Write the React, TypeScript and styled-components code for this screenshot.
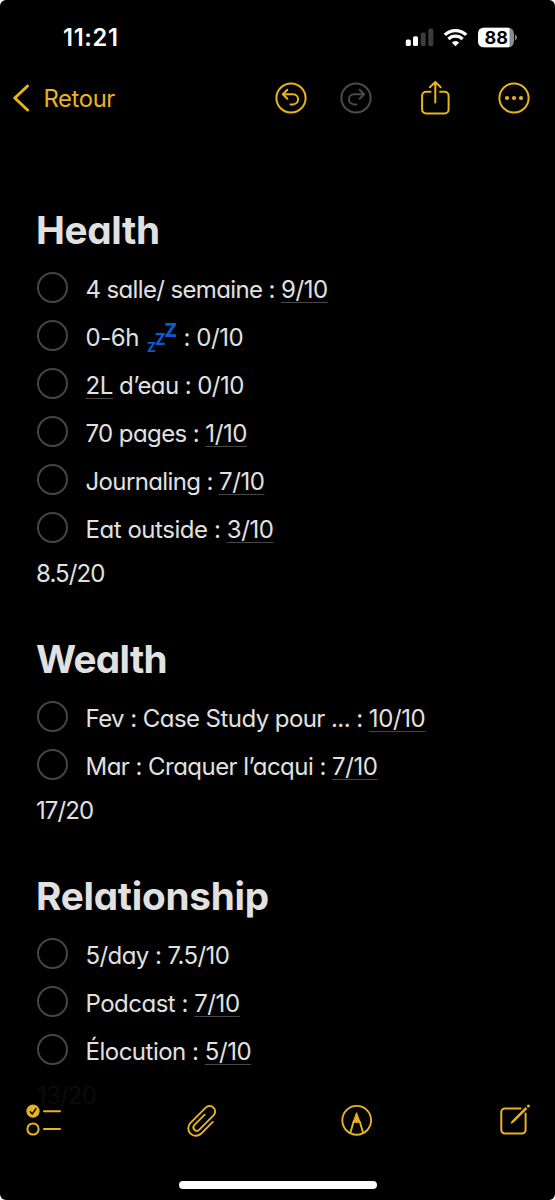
import React from 'react';
import styled, { createGlobalStyle } from 'styled-components';

const GOLD = '#e8b41c';

const Global = createGlobalStyle`
  body { margin: 0; background: #fff; }
  * { box-sizing: border-box; }
`;

const Screen = styled.main`
  width: 555px;
  height: 1200px;
  display: flex;
  flex-direction: column;
  overflow: hidden;
  background: #000;
  border-radius: 6px;
  color: #e1e1e1;
  font-family: Inter, 'Liberation Sans', sans-serif;
`;

const StatusBar = styled.header`
  height: 70px;
  flex: none;
  display: flex;
  justify-content: space-between;
  align-items: center;
  padding: 5px 38px 0 63px;
  color: #fff;
`;

const Clock = styled.time`
  font-size: 23.6px;
  font-weight: 600;
  letter-spacing: 0.7px;
`;

const StatusIcons = styled.div`
  display: flex;
  align-items: center;
`;

const NavBar = styled.nav`
  height: 56px;
  flex: none;
  display: flex;
  align-items: center;
  padding: 0 24px 0 12px;
  color: ${GOLD};
`;

const BackButton = styled.button`
  display: flex;
  align-items: center;
  gap: 13.4px;
  padding: 0;
  border: 0;
  background: none;
  color: inherit;
  font: 400 23.8px/30px Inter, sans-serif;
  letter-spacing: -0.35px;
`;

const BackLabel = styled.span`
  padding-top: 2px;
`;

const NavActions = styled.div`
  display: flex;
  align-items: center;
  margin-left: auto;
`;

const IconButton = styled.button<{ $dim?: boolean; $gap?: number }>`
  display: flex;
  padding: 0;
  border: 0;
  margin-left: ${(p) => p.$gap ?? 0}px;
  background: none;
  color: ${(p) => (p.$dim ? '#4b4b4d' : GOLD)};
`;

const Note = styled.article`
  flex: 1;
  min-height: 0;
  overflow: hidden;
  padding: 77px 36px 0;
  font-size: 24px;
  font-feature-settings: 'cv11';
`;

const Section = styled.section`
  margin-bottom: 34px;
`;

const Heading = styled.h1<{ $spacing: number }>`
  margin: 0 0 7px;
  height: 53px;
  line-height: 54px;
  font-size: 38.7px;
  font-weight: 700;
  letter-spacing: ${(p) => p.$spacing}px;
`;

const List = styled.ul`
  margin: 0;
  padding: 0;
  list-style: none;
`;

const Item = styled.li`
  display: flex;
  align-items: center;
  height: 48px;
  padding-left: 1px;
`;

const Circle = styled.span`
  flex: none;
  width: 31px;
  height: 31px;
  border: 2px solid #454548;
  border-radius: 50%;
`;

const Label = styled.span<{ $spacing: number }>`
  margin-left: 17.5px;
  padding-top: 5px;
  line-height: 30px;
  white-space: pre;
  letter-spacing: ${(p) => p.$spacing}px;
`;

const Detected = styled.span`
  letter-spacing: -0.4px;
  text-decoration: underline;
  text-decoration-color: #464648;
  text-decoration-thickness: 1px;
  text-underline-offset: 4px;
`;

const Total = styled.p`
  margin: 0;
  height: 47px;
  line-height: 45px;
  letter-spacing: -0.9px;
`;

const FadedTotal = styled.p`
  margin: -26px 0 0;
  padding-left: 1px;
  line-height: 30px;
  letter-spacing: -0.8px;
  color: #0b0b0b;
`;

const Sleep = styled.svg`
  vertical-align: -7px;
  margin: -6px 0 0 2px;
  overflow: visible;
`;

const Toolbar = styled.footer`
  position: relative;
  height: 72px;
  flex: none;
  display: flex;
  justify-content: space-between;
  align-items: flex-start;
  margin-top: -14px;
  padding: 0 23px 0 26px;
`;

const HomeArea = styled.div`
  height: 30px;
  flex: none;
  display: flex;
  justify-content: center;
  padding-top: 11px;
`;

const HomeBar = styled.div`
  width: 198px;
  height: 8px;
  border-radius: 4px;
  background: #fff;
`;

const Zzz = () => (
  <Sleep width="30" height="30" viewBox="0 0 30 30" fill="#0b5bd3" fontFamily="Inter, sans-serif" fontWeight="800" letterSpacing="0">
    <text x="0" y="29" fontSize="13" textLength="8.8" lengthAdjust="spacingAndGlyphs">Z</text>
    <text x="8" y="21.5" fontSize="15.5" textLength="10.6" lengthAdjust="spacingAndGlyphs">Z</text>
    <text x="17.5" y="13.5" fontSize="18.8" textLength="12.6" lengthAdjust="spacingAndGlyphs">Z</text>
  </Sleep>
);

type Row = { text: React.ReactNode; spacing: number };
type Group = { title: string; spacing: number; rows: Row[]; total?: string };

const groups: Group[] = [
  {
    title: 'Health',
    spacing: -0.35,
    total: '8.5/20',
    rows: [
      { spacing: -0.63, text: <>4 salle/ semaine : <Detected>9/10</Detected></> },
      { spacing: -0.45, text: <>0-6h <Zzz /> : 0/10</> },
      { spacing: -0.57, text: <><Detected>2L</Detected> d’eau : 0/10</> },
      { spacing: -0.59, text: <>70 pages : <Detected>1/10</Detected></> },
      { spacing: -0.62, text: <>Journaling : <Detected>7/10</Detected></> },
      { spacing: -0.45, text: <>Eat outside : <Detected>3/10</Detected></> },
    ],
  },
  {
    title: 'Wealth',
    spacing: -0.7,
    total: '17/20',
    rows: [
      { spacing: -0.56, text: <>Fev : Case Study pour ... : <Detected>10/10</Detected></> },
      { spacing: -0.54, text: <>Mar : Craquer l’acqui : <Detected>7/10</Detected></> },
    ],
  },
  {
    title: 'Relationship',
    spacing: -0.25,
    rows: [
      { spacing: -0.57, text: <>5/day : 7.5/10</> },
      { spacing: -0.5, text: <>Podcast : <Detected>7/10</Detected></> },
      { spacing: -0.5, text: <>Élocution : <Detected>5/10</Detected></> },
    ],
  },
];

const line = { fill: 'none', stroke: 'currentColor', strokeLinecap: 'round', strokeLinejoin: 'round' } as const;

export default function App() {
  return (
    <>
      <Global />
      <Screen>
        <StatusBar>
          <Clock>11:21</Clock>
          <StatusIcons>
            <svg width="112" height="24" viewBox="0 0 112 24">
              <g fill="#fff">
                <rect x="0.8" y="13.5" width="5" height="6.5" rx="1.5" />
                <rect x="8" y="10.3" width="5" height="9.7" rx="1.5" />
                <g fill="#3c3c3c">
                  <rect x="15.7" y="6.5" width="5" height="13.5" rx="1.5" />
                  <rect x="23.3" y="2.5" width="5" height="17.5" rx="1.5" />
                </g>
                <path d="M50.5 20.2l-3.7-3.7a5.3 5.3 0 0 1 7.4 0z" />
              </g>
              <path d="M39.8 8.9a15.3 15.3 0 0 1 21.4 0M43.4 13a10.2 10.2 0 0 1 14.2 0" fill="none" stroke="#fff" strokeWidth="3.3" />
              <clipPath id="battery"><rect x="73" y="1.5" width="36" height="20" rx="6.2" /></clipPath>
              <g clipPath="url(#battery)">
                <rect x="73" y="1.5" width="36" height="20" fill="#8b8b8b" />
                <rect x="73" y="1.5" width="31.5" height="20" fill="#fff" />
              </g>
              <path d="M110 8.5q2 .8 2 3t-2 3z" fill="#8b8b8b" />
              <text x="91.2" y="18" textAnchor="middle" fontSize="18" fontWeight="700" fontFamily="Inter, sans-serif" fill="#000">88</text>
            </svg>
          </StatusIcons>
        </StatusBar>
        <NavBar>
          <BackButton>
            <svg width="18" height="28" viewBox="0 0 18 28" {...line} strokeWidth="3"><path d="M15.5 2L2.8 14l12.7 12" /></svg>
            <BackLabel>Retour</BackLabel>
          </BackButton>
          <NavActions>
            <IconButton aria-label="Undo">
              <svg width="34" height="34" viewBox="0 0 34 34" {...line} strokeWidth="2">
                <circle cx="17" cy="17" r="14.6" />
                <path d="M13.3 8.7L8.8 13.2l4.5 4.5M9.3 13.2h9.7a5.1 5.1 0 0 1 0 10.2h-2.5" />
              </svg>
            </IconButton>
            <IconButton $dim $gap={31} aria-label="Redo">
              <svg width="34" height="34" viewBox="0 0 34 34" {...line} strokeWidth="2">
                <circle cx="17" cy="17" r="14.6" />
                <path d="M20.7 8.7l4.5 4.5-4.5 4.5M24.7 13.2H15a5.1 5.1 0 0 0 0 10.2h2.5" />
              </svg>
            </IconButton>
            <IconButton $gap={46} aria-label="Share">
              <svg width="34" height="38" viewBox="0.9 0.4 34 38" {...line} strokeWidth="2">
                <path d="M12.5 13.2H8a4 4 0 0 0-4 4v13.6a4 4 0 0 0 4 4h18.5a4 4 0 0 0 4-4V17.2a4 4 0 0 0-4-4H22M17.2 24V3.5M11.8 8.7l5.4-5.4 5.4 5.4" />
              </svg>
            </IconButton>
            <IconButton $gap={44} aria-label="More">
              <svg width="34" height="34" viewBox="0 0 34 34" {...line} strokeWidth="2">
                <circle cx="17" cy="17" r="14.6" />
                <g fill="currentColor" stroke="none"><circle cx="10" cy="17" r="2.1" /><circle cx="17" cy="17" r="2.1" /><circle cx="24" cy="17" r="2.1" /></g>
              </svg>
            </IconButton>
          </NavActions>
        </NavBar>
        <Note>
          {groups.map((g) => (
            <Section key={g.title}>
              <Heading $spacing={g.spacing}>{g.title}</Heading>
              <List>
                {g.rows.map((r, i) => (
                  <Item key={i}><Circle /><Label $spacing={r.spacing}>{r.text}</Label></Item>
                ))}
              </List>
              {g.total && <Total>{g.total}</Total>}
            </Section>
          ))}
          <FadedTotal>13/20</FadedTotal>
        </Note>
        <Toolbar>
          <IconButton aria-label="Checklist">
            <svg width="36" height="44" viewBox="0 0 36 44" {...line} strokeWidth="2">
              <circle cx="7" cy="13.2" r="6.6" fill="currentColor" stroke="none" />
              <path d="M4.3 13.7l2 2.2 3.7-5.3" stroke="#000" strokeWidth="1.5" />
              <circle cx="7" cy="31" r="5.6" /><path d="M18 13.2h16M18 31h16" />
            </svg>
          </IconButton>
          <IconButton aria-label="Attach">
            <svg width="34" height="44" viewBox="0.9 0 34 44" {...line} strokeWidth="1.9">
              <path d="M28.7 23.9L16.8 35.8A7.5 7.5 0 0 1 6.2 25.2L21.6 9.6a5.5 5.5 0 0 1 7.8 7.8L15 31.9a3.4 3.4 0 0 1-4.8-4.8L20.6 16.7" />
            </svg>
          </IconButton>
          <IconButton aria-label="Markup">
            <svg width="34" height="44" viewBox="-0.3 0 34 44" {...line} strokeWidth="1.9">
              <circle cx="15.4" cy="22.3" r="14.4" />
              <path d="M12.2 24l-3.2 11M18.6 24l3.2 11" />
              <path d="M15.4 15l3.2 8.8h-6.4z" fill="currentColor" strokeWidth="1" />
              <path d="M12.2 24h6.4" strokeWidth="1.6" />
            </svg>
          </IconButton>
          <IconButton aria-label="Compose">
            <svg width="34" height="44" viewBox="0 0 34 44" {...line} strokeWidth="2">
              <path d="M22.6 10.4H6.9a3.6 3.6 0 0 0-3.6 3.6V32a3.6 3.6 0 0 0 3.6 3.6H24A3.6 3.6 0 0 0 27.6 32V15.5" />
              <path d="M12.4 25.9l1.3-3L27.5 9.1l1.8 1.8-13.9 13.8z" fill="currentColor" stroke="none" />
              <circle cx="30.4" cy="8" r="1.5" fill="currentColor" stroke="none" />
            </svg>
          </IconButton>
        </Toolbar>
        <HomeArea><HomeBar /></HomeArea>
      </Screen>
    </>
  );
}
